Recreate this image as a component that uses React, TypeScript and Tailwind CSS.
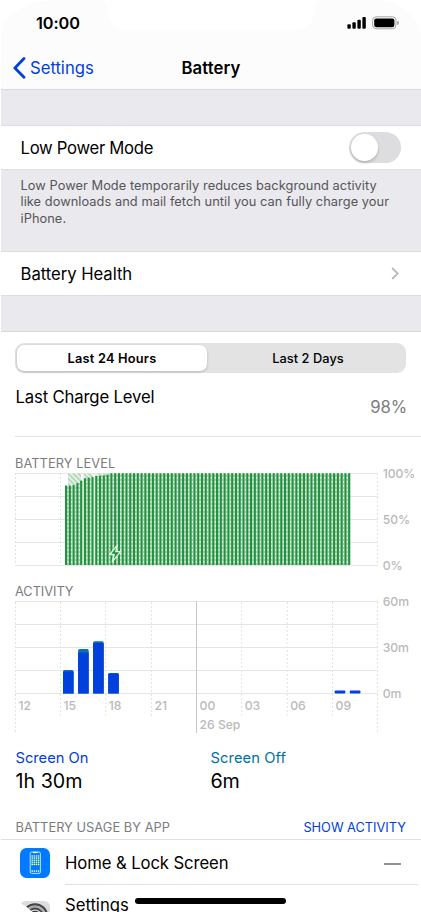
import type { ReactNode } from "react";

const LEVEL_LEFT = 65;
const SLOT = 3.775;
const BAR_COUNT = 76;

// Top edge of each quarter-hour bar while the phone was still charging up.
const chargingTops = [12.5, 12.5, 12, 10.2, 7.6, 5.2, 4.6, 4.2, 3, 2.8, 2.4, 1.6];

const levelBars = Array.from({ length: BAR_COUNT }, (_, i) => ({
  x: LEVEL_LEFT + i * SLOT,
  top: chargingTops[i] ?? 0.2,
}));

const gridX = [15.5, 60.5, 105.7, 151.5, 196.5, 241.7, 287.2, 332.5, 377.5];
const gridY = [0.5, 23.5, 46.5, 69.5, 92.5];
const hours = ["12", "15", "18", "21", "00", "03", "06", "09"];

const activityBars = [
  { x: 63, off: 69, on: 70.5 },
  { x: 78.1, off: 48, on: 51.5 },
  { x: 93.1, off: 40.3, on: 42 },
  { x: 108.2, off: 72.3, on: 72.3 },
];

function GridRows() {
  return (
    <>
      {gridY.map((y) => (
        <line key={y} x1="15" x2="378" y1={y} y2={y} stroke="#e5e5e6" />
      ))}
    </>
  );
}

function AxisLabel({ x, y, children }: { x: number; y: number; children: ReactNode }) {
  return (
    <text x={x} y={y + 4.4} fontSize="12.2" fontWeight="500" letterSpacing="-0.05" fill="#b9b9ba">
      {children}
    </text>
  );
}

function LevelChart() {
  return (
    <svg width="421" height="104" viewBox="0 -6 421 104" className="block overflow-visible">
      <defs>
        <pattern id="hatch" width="3.6" height="3.6" patternUnits="userSpaceOnUse" patternTransform="rotate(-45)">
          <rect width="3.6" height="3.6" fill="#f1f8f2" />
          <rect width="2.1" height="3.6" fill="#b3d9bc" />
        </pattern>
        <pattern id="gap" width="1.8" height="4" patternUnits="userSpaceOnUse">
          <rect width="1.8" height="4" fill="#a3d0ad" />
          <rect y="0" width="1.8" height="1.6" fill="#e6f4e9" />
        </pattern>
      </defs>
      <GridRows />
      {[15.5, 60.5, 377.5].map((x) => (
        <line key={x} x1={x} x2={x} y1="0" y2="92" stroke="#e3e3e4" strokeDasharray="2 2" />
      ))}
      <rect x="68" y="0.5" width="13" height="12" fill="url(#hatch)" />
      <rect x="83.5" y="0.5" width="9.5" height="5" fill="url(#hatch)" />
      <rect x="95.5" y="0.5" width="14" height="3.5" fill="url(#hatch)" />
      {levelBars.map((bar, i) => (
        <g key={bar.x}>
          {i < BAR_COUNT - 1 && (
            <rect
              x={bar.x + 2}
              y={bar.top}
              width={SLOT - 2}
              height={92 - bar.top}
              fill={i === 4 || i === 7 ? "#e4f2e7" : "url(#gap)"}
            />
          )}
          <rect x={bar.x} y={bar.top} width="2.15" height={92 - bar.top} fill="#239240" />
        </g>
      ))}
      <path
        d="M117.5 71.8 L109.8 81.5 L114.2 81.5 L112.2 88.8 L120.5 78.7 L115.8 78.7 Z"
        fill="#239240"
        stroke="#dff6e4"
        strokeWidth="1.3"
        strokeLinejoin="round"
      />
      <AxisLabel x={382.7} y={0.7}>100%</AxisLabel>
      <AxisLabel x={382.7} y={46.5}>50%</AxisLabel>
      <AxisLabel x={382.7} y={92.2}>0%</AxisLabel>
    </svg>
  );
}

function ActivityChart() {
  return (
    <svg width="421" height="140" viewBox="0 -6 421 140" className="block">
      <GridRows />
      {gridX.map((x, i) =>
        i === 4 ? (
          <line key={x} x1={x} x2={x} y1="0" y2="132" stroke="#c9c9ca" />
        ) : (
          <line
            key={x}
            x1={x}
            x2={x}
            y1="1"
            y2={i === 0 || i === 8 ? 132 : 115}
            stroke="#e3e3e4"
            strokeDasharray="2 2"
          />
        ),
      )}
      {activityBars.map((bar) => (
        <g key={bar.x}>
          <path d={`M${bar.x} 92.6 V${bar.off + 1.5} q0 -1.5 1.5 -1.5 h7.6 q1.5 0 1.5 1.5 V92.6 Z`} fill="#0b74a6" />
          <path d={`M${bar.x} 92.6 V${bar.on + 1} q0 -1 1 -1 h8.6 q1 0 1 1 V92.6 Z`} fill="#0040dd" />
        </g>
      ))}
      <rect x="334.7" y="89.4" width="10.6" height="3.2" rx="0.8" fill="#0040dd" />
      <rect x="349.8" y="89.4" width="10.6" height="3.2" rx="0.8" fill="#0040dd" />
      {hours.map((hour, i) => (
        <AxisLabel key={hour} x={gridX[i] + 3.1} y={105}>{hour}</AxisLabel>
      ))}
      <AxisLabel x={199.6} y={123.7}>26 Sep</AxisLabel>
      <AxisLabel x={382.7} y={1}>60m</AxisLabel>
      <AxisLabel x={382.7} y={46.7}>30m</AxisLabel>
      <AxisLabel x={382.7} y={92.5}>0m</AxisLabel>
    </svg>
  );
}

function PhoneIcon() {
  return (
    <svg width="30" height="30" viewBox="0 0 30 30" className="block">
      <rect width="30" height="30" rx="6.5" fill="#007aff" />
      <rect x="10.2" y="4" width="10.2" height="21.4" rx="1.4" fill="none" stroke="#d8ebff" strokeWidth="0.9" />
      <path d="M13 4.5 h4.6" stroke="#fff" strokeWidth="1.2" />
      {[8, 10.1, 12.2, 14.3, 16.4].map((y) =>
        [12.2, 14.3, 16.4, 18.5].map((x) => <circle key={`${x}-${y}`} cx={x} cy={y} r="0.8" fill="#fff" />),
      )}
      {[12.2, 14.3, 16.4, 18.5].map((x) => (
        <circle key={x} cx={x} cy="23.1" r="0.8" fill="#fff" />
      ))}
    </svg>
  );
}

function GearIcon() {
  return (
    <svg width="30" height="11" viewBox="0 0 30 11" className="block">
      <defs>
        <clipPath id="tile">
          <path d="M1 2.4 Q3 0 6.5 0 H23.5 Q30 0 30 6.5 V11 H12.5 Q8 5.8 1 2.4 Z" />
        </clipPath>
      </defs>
      <g clipPath="url(#tile)" fill="none">
        <rect width="30" height="11" fill="#dcdce0" />
        <circle cx="15" cy="15.5" r="12.2" stroke="#454548" strokeWidth="2.2" />
        <circle cx="15" cy="15.5" r="9.9" stroke="#a7a7aa" strokeWidth="1.6" />
        <circle cx="15" cy="15.5" r="8" stroke="#454548" strokeWidth="1.9" />
        <circle cx="15" cy="15.5" r="4.9" stroke="#3a3a3d" strokeWidth="1.8" />
      </g>
    </svg>
  );
}

function StatusBar() {
  return (
    <div className="relative h-[46px]">
      <svg width="420" height="46" viewBox="1 0 420 46" className="absolute inset-0">
        <path d="M1 0 H56 C24 1 4 14 1 34 Z" fill="#fff" />
        <path d="M421 0 H375 C402 2 417 14 421 34 Z" fill="#fff" />
        <path d="M101 0 Q107 2 107.5 10 C108 23 115 30 128 30 H294 C307 30 314 23 314.5 10 Q315 2 321 0 Z" fill="#fff" />
      </svg>
      <div className="relative flex items-center pt-[13px] pr-[22px] pl-[35px]">
        <span className="text-[16.3px] leading-5 font-semibold tracking-[-0.1px]">10:00</span>
        <svg width="52" height="14" viewBox="0 0 52 14" className="ml-auto">
          <rect x="0.4" y="8.2" width="3.4" height="4.5" rx="1" />
          <rect x="5.4" y="6.3" width="3.4" height="6.4" rx="1" />
          <rect x="10.4" y="3.8" width="3.4" height="8.9" rx="1" />
          <rect x="15.4" y="1" width="3.4" height="11.7" rx="1" />
          <rect x="25.6" y="0.8" width="23.4" height="12" rx="3.7" fill="none" stroke="#a5a5a5" />
          <rect x="27.2" y="2.4" width="20.2" height="8.8" rx="2.2" />
          <path d="M50.2 4.8 Q52 5.4 52 6.9 Q52 8.4 50.2 9 Z" fill="#a5a5a5" />
        </svg>
      </div>
    </div>
  );
}

export default function App() {
  return (
    <div className="h-[912px] w-[421px] overflow-hidden bg-white pl-px font-['Inter',sans-serif] text-black">
      <header className="h-[90px] border-b border-[#dadadc] bg-[#fcfcfc]">
        <StatusBar />
        <div className="grid h-[43px] grid-cols-3 items-center">
          <div className="flex items-center gap-[4px] pl-[12px] text-[#0040dd]">
            <svg width="13" height="22" viewBox="0 0 13 22">
              <path d="M11 1.6 L1.9 10.9 L11 20.2" fill="none" stroke="currentColor" strokeWidth="2.8" strokeLinecap="round" strokeLinejoin="round" />
            </svg>
            <span className="text-[16.7px] leading-5 tracking-[-0.02px]">Settings</span>
          </div>
          <h1 className="text-center text-[16.7px] leading-5 font-semibold tracking-[0.1px]">Battery</h1>
        </div>
      </header>

      <div className="h-[35px] bg-[#eae9ee]" />

      <div className="flex h-[45px] items-center justify-between border-y border-[#dedee0] pr-[20px] pl-[19.5px]">
        <span className="pt-[2px] text-[16.7px] tracking-[-0.3px]">Low Power Mode</span>
        <div className="h-[31px] w-[52px] rounded-full bg-[#dddddf] p-[2px]">
          <div className="h-[27px] w-[27px] rounded-full bg-white shadow-[0_2px_3px_rgba(0,0,0,0.18)]" />
        </div>
      </div>

      <p className="h-[81px] bg-[#eae9ee] pt-[8px] pl-[19.5px] text-[12.8px] leading-[16.3px] tracking-[0.06px] text-[#555558]">
        Low Power Mode temporarily reduces background activity
        <br />
        like downloads and mail fetch until you can fully charge your
        <br />
        iPhone.
      </p>

      <div className="flex h-[45px] items-center justify-between border-y border-[#dedee0] pr-[22px] pl-[19.5px]">
        <span className="pt-[2px] text-[16.7px] tracking-[-0.04px]">Battery Health</span>
        <svg width="8" height="13" viewBox="0 0 8 13">
          <path d="M1.2 1 L6.7 6.5 L1.2 12" fill="none" stroke="#bcbcbf" strokeWidth="1.9" />
        </svg>
      </div>

      <div className="h-[36px] border-b border-[#d8d8da] bg-[#eae9ee]" />

      <div className="pt-[11px] pl-[14px]">
        <div className="flex h-[30px] w-[391px] rounded-[9px] bg-[#e3e3e3] p-[2px] text-[12.8px] leading-[27px]">
          <div className="h-[26px] w-[190px] rounded-[7px] bg-white text-center font-semibold tracking-[0.2px] shadow-[0_1px_3px_rgba(0,0,0,0.2)]">
            Last 24 Hours
          </div>
          <div className="flex-1 pl-[5px] text-center font-medium tracking-[0.05px]">Last 2 Days</div>
        </div>
        <div className="flex h-[64px] justify-between border-b border-[#dfdfe1] pr-[14px]">
          <span className="pt-[14px] pl-[0.5px] text-[16.7px] leading-5 tracking-[-0.15px]">Last Charge Level</span>
          <span className="pt-[24px] text-[16.7px] leading-5 tracking-[-0.1px] text-[#7c7c7f]">98%</span>
        </div>
      </div>

      <section className="-ml-px">
        <h2 className="h-[30px] pt-[18px] pl-[15px] text-[12.8px] leading-[17px] tracking-[0.08px] text-[#7c7c7f]">BATTERY LEVEL</h2>
        <LevelChart />
      </section>

      <section className="-ml-px">
        <h2 className="h-[24px] pt-[12px] pl-[15px] text-[12.8px] leading-[17px] tracking-[-0.05px] text-[#7c7c7f]">ACTIVITY</h2>
        <ActivityChart />
      </section>

      <div className="grid h-[78px] grid-cols-[195px_1fr] pt-[13px] pl-[14.5px]">
        <div>
          <div className="text-[14.7px] leading-5 text-[#0040dd]">Screen On</div>
          <div className="text-[19.7px] leading-[26px]">1h 30m</div>
        </div>
        <div>
          <div className="text-[14.7px] leading-5 tracking-[0.1px] text-[#0071a4]">Screen Off</div>
          <div className="text-[19.7px] leading-[26px] tracking-[-0.1px]">6m</div>
        </div>
      </div>

      <div className="flex h-[27px] justify-between border-b border-[#dfdfe1] pt-[7px] pr-[15px] pl-[14.5px] text-[12.8px] leading-4">
        <span className="tracking-[0.06px] text-[#7c7c7f]">BATTERY USAGE BY APP</span>
        <span className="text-[#0040dd]">SHOW ACTIVITY</span>
      </div>

      <div className="flex h-[45px] pl-[19px]">
        <div className="flex w-[45px] items-center">
          <PhoneIcon />
        </div>
        <div className="mr-[3px] flex flex-1 items-center justify-between border-b border-[#dfdfe1] pr-[17px]">
          <span className="pt-[3px] text-[16.7px] tracking-[-0.1px]">Home &amp; Lock Screen</span>
          <span className="mt-[4px] h-[2px] w-[17px] bg-[#929295]" />
        </div>
      </div>

      <div className="relative flex h-[30px] pl-[19px]">
        <div className="w-[45px] pt-[16px]">
          <GearIcon />
        </div>
        <span className="pt-[10px] text-[16.7px] leading-5 tracking-[-0.02px]">Settings</span>
        <div className="absolute top-[13px] left-[134px] h-[6px] w-[151px] rounded-full bg-black" />
      </div>
    </div>
  );
}
